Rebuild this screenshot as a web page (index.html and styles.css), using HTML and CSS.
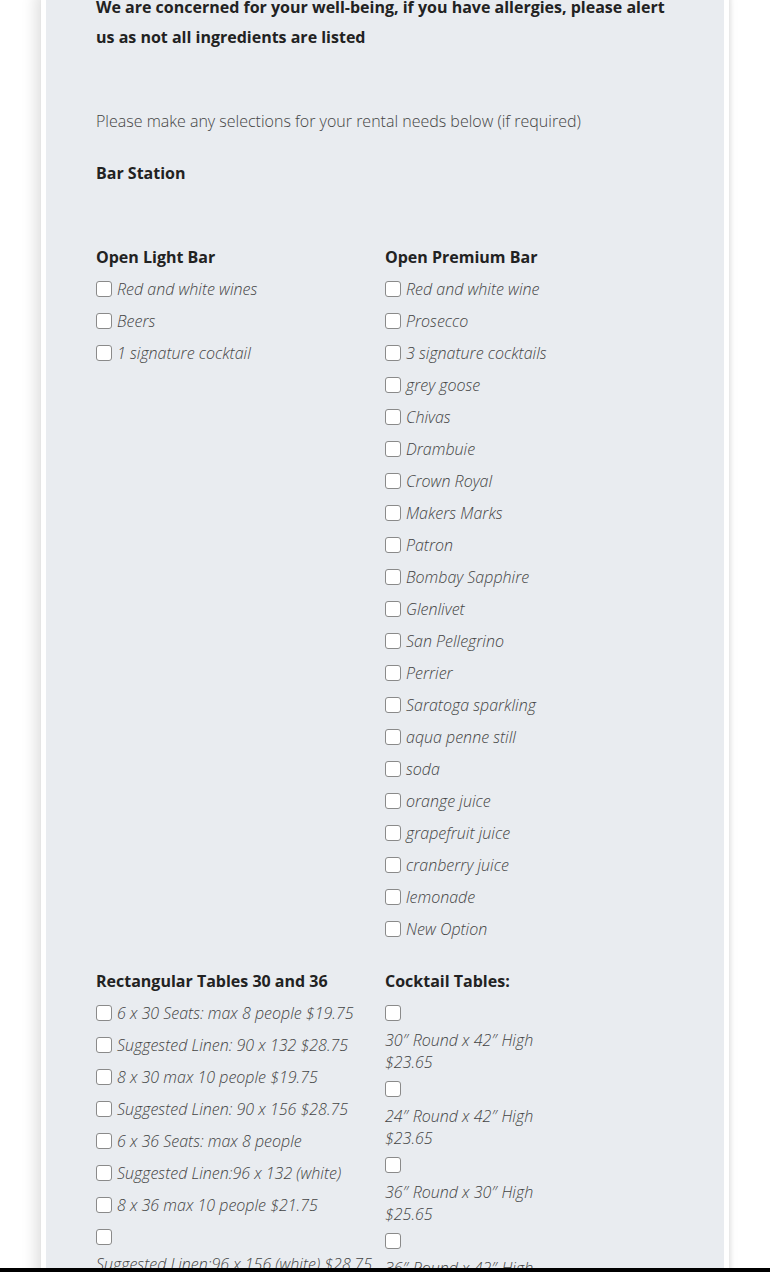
FILE: index.html
```html
<!DOCTYPE html>
<html lang="en">
<head>
<meta charset="utf-8">
<title>Rental selections</title>
<link rel="stylesheet" href="styles.css">
</head>
<body>
<div class="card">
  <div class="panel">
    <p class="notice">We are concerned for your well-being, if you have allergies, please alert us as not all ingredients are listed</p>
    <p class="intro">Please make any selections for your rental needs below (if required)</p>
    <h3 class="section">Bar Station</h3>

    <div class="cols first">
      <div class="col">
        <h4 class="group">Open Light Bar</h4>
        <ul class="opts">
          <li><label><input type="checkbox"><span>Red and white wines</span></label></li>
          <li><label><input type="checkbox"><span>Beers</span></label></li>
          <li><label><input type="checkbox"><span>1 signature cocktail</span></label></li>
        </ul>
      </div>
      <div class="col">
        <h4 class="group">Open Premium Bar</h4>
        <ul class="opts">
          <li><label><input type="checkbox"><span>Red and white wine</span></label></li>
          <li><label><input type="checkbox"><span>Prosecco</span></label></li>
          <li><label><input type="checkbox"><span>3 signature cocktails</span></label></li>
          <li><label><input type="checkbox"><span>grey goose</span></label></li>
          <li><label><input type="checkbox"><span>Chivas</span></label></li>
          <li><label><input type="checkbox"><span>Drambuie</span></label></li>
          <li><label><input type="checkbox"><span>Crown Royal</span></label></li>
          <li><label><input type="checkbox"><span>Makers Marks</span></label></li>
          <li><label><input type="checkbox"><span>Patron</span></label></li>
          <li><label><input type="checkbox"><span>Bombay Sapphire</span></label></li>
          <li><label><input type="checkbox"><span>Glenlivet</span></label></li>
          <li><label><input type="checkbox"><span>San Pellegrino</span></label></li>
          <li><label><input type="checkbox"><span>Perrier</span></label></li>
          <li><label><input type="checkbox"><span>Saratoga sparkling</span></label></li>
          <li><label><input type="checkbox"><span>aqua penne still</span></label></li>
          <li><label><input type="checkbox"><span>soda</span></label></li>
          <li><label><input type="checkbox"><span>orange juice</span></label></li>
          <li><label><input type="checkbox"><span>grapefruit juice</span></label></li>
          <li><label><input type="checkbox"><span>cranberry juice</span></label></li>
          <li><label><input type="checkbox"><span>lemonade</span></label></li>
          <li><label><input type="checkbox"><span>New Option</span></label></li>
        </ul>
      </div>
    </div>

    <div class="cols second">
      <div class="col">
        <h4 class="group">Rectangular Tables 30 and 36</h4>
        <ul class="opts">
          <li><label><input type="checkbox"><span>6 x 30 Seats: max 8 people $19.75</span></label></li>
          <li><label><input type="checkbox"><span>Suggested Linen: 90 x 132 $28.75</span></label></li>
          <li><label><input type="checkbox"><span>8 x 30 max 10 people $19.75</span></label></li>
          <li><label><input type="checkbox"><span>Suggested Linen: 90 x 156 $28.75</span></label></li>
          <li><label><input type="checkbox"><span>6 x 36 Seats: max 8 people</span></label></li>
          <li><label><input type="checkbox"><span>Suggested Linen:96 x 132 (white)</span></label></li>
          <li><label><input type="checkbox"><span>8 x 36 max 10 people $21.75</span></label></li>
          <li class="stack"><label><input type="checkbox"><span>Suggested Linen:96 x 156 (white) $28.75</span></label></li>
        </ul>
      </div>
      <div class="col">
        <h4 class="group">Cocktail Tables:</h4>
        <ul class="opts narrow">
          <li class="stack"><label><input type="checkbox"><span>30″ Round x 42″ High $23.65</span></label></li>
          <li class="stack"><label><input type="checkbox"><span>24″ Round x 42″ High $23.65</span></label></li>
          <li class="stack"><label><input type="checkbox"><span>36″ Round x 30″ High $25.65</span></label></li>
          <li class="stack"><label><input type="checkbox"><span>36″ Round x 42″ High $25.65</span></label></li>
        </ul>
      </div>
    </div>
  </div>
</div>
<div class="bottom-bar"></div>
</body>
</html>
```

FILE: styles.css
```css
html, body {
  margin: 0;
  padding: 0;
  background: #ffffff;
}

body {
  font-family: "Open Sans", "Liberation Sans", sans-serif;
  color: #444;
  overflow: hidden;
}

.card {
  width: 678px;
  margin: -8px auto 0;
  padding: 0 5px;
  background: #ffffff;
  box-shadow: -5px 0 14px rgba(0, 0, 0, 0.13), 2px 0 4px rgba(0, 0, 0, 0.08);
}

.panel {
  background: #e9ecf0;
  padding: 0 50px 40px;
}

.notice {
  margin: 0;
  font-size: 16px;
  line-height: 30px;
  font-weight: 700;
  color: #222;
}

.intro {
  margin: 54px 0 0;
  font-size: 16px;
  line-height: 30px;
  font-weight: 300;
  color: #444;
}

.section {
  margin: 22px 0 0;
  font-size: 16px;
  line-height: 30px;
  font-weight: 700;
  color: #222;
}

.cols {
  display: grid;
  grid-template-columns: 289px 289px;
}

.cols.first {
  margin-top: 53px;
}

.cols.second {
  margin-top: 20px;
}

.group {
  margin: 0;
  font-size: 16px;
  line-height: 32px;
  font-weight: 700;
  color: #222;
}

.opts {
  list-style: none;
  margin: 0;
  padding: 0;
}

.opts li label {
  display: flex;
  align-items: center;
  height: 32px;
  font-size: 16px;
  font-weight: 300;
  font-style: italic;
  color: #444;
  white-space: nowrap;
}

.opts input {
  appearance: none;
  -webkit-appearance: none;
  width: 16px;
  height: 16px;
  margin: 0 5px 0 0;
  border: 1px solid #8a8a8a;
  border-radius: 3px;
  background: #fff;
  flex: none;
}

.opts li.stack label {
  display: block;
  height: auto;
  white-space: normal;
}

.opts li.stack input {
  display: block;
  margin: 8px 0 8px 0;
}

.opts li.stack span {
  display: block;
  line-height: 22px;
}

.opts.narrow li.stack span {
  width: 175px;
}

.bottom-bar {
  position: fixed;
  left: 0;
  right: 0;
  bottom: 0;
  height: 4px;
  background: #000;
}
```
